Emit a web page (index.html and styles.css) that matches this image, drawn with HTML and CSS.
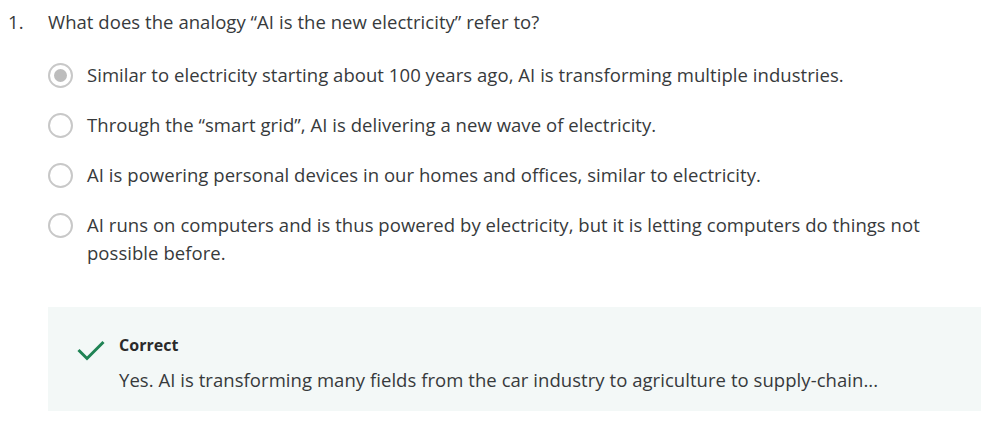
FILE: index.html
```html
<!DOCTYPE html>
<html lang="en">
<head>
<meta charset="utf-8">
<link rel="stylesheet" href="styles.css">
</head>
<body>
<div class="question">
  <div class="q-row">
    <span class="q-num">1.</span>
    <span class="q-text">What does the analogy “AI is the new electricity” refer to?</span>
  </div>
  <div class="options">
    <div class="option">
      <span class="radio checked"></span>
      <span class="opt-text">Similar to electricity starting about 100 years ago, AI is transforming multiple industries.</span>
    </div>
    <div class="option">
      <span class="radio"></span>
      <span class="opt-text">Through the “smart grid”, AI is delivering a new wave of electricity.</span>
    </div>
    <div class="option">
      <span class="radio"></span>
      <span class="opt-text">AI is powering personal devices in our homes and offices, similar to electricity.</span>
    </div>
    <div class="option">
      <span class="radio"></span>
      <span class="opt-text">AI runs on computers and is thus powered by electricity, but it is letting computers do things not possible before.</span>
    </div>
  </div>
  <div class="feedback">
    <svg class="check" width="28" height="22" viewBox="0 0 28 22" aria-hidden="true">
      <polyline points="1.5,10 10,18.5 26.5,2" fill="none" stroke="#1f8354" stroke-width="3"/>
    </svg>
    <div class="fb-body">
      <div class="fb-title">Correct</div>
      <div class="fb-text">Yes. AI is transforming many fields from the car industry to agriculture to supply-chain...</div>
    </div>
  </div>
</div>
</body>
</html>
```

FILE: styles.css
```css
html, body {
  margin: 0;
  background: #ffffff;
}
body {
  padding: 8px;
  font-family: "Open Sans", "Liberation Sans", sans-serif;
  font-size: 18.5px;
  letter-spacing: 0.05px;
  line-height: 28px;
  color: #373a3c;
}
.q-row {
  display: flex;
}
.q-num {
  width: 40px;
  flex: none;
}
.options {
  margin: 25px 0 0 40px;
  display: flex;
  flex-direction: column;
  gap: 22px;
}
.option {
  display: flex;
  align-items: flex-start;
  gap: 14px;
  padding-right: 20px;
}
.radio {
  flex: none;
  box-sizing: border-box;
  width: 25px;
  height: 25px;
  margin-top: 1.5px;
  border: 2.5px solid #c8c8c8;
  border-radius: 50%;
  display: flex;
  align-items: center;
  justify-content: center;
}
.radio.checked::after {
  content: "";
  width: 13px;
  height: 13px;
  border-radius: 50%;
  background: #bdbdbd;
}
.feedback {
  margin: 40px 0 0 40px;
  width: 933px;
  box-sizing: border-box;
  background: #f3f8f7;
  padding: 26px 0 17px 29px;
  display: flex;
  gap: 14px;
}
.check {
  flex: none;
  margin-top: 7px;
}
.fb-title {
  font-size: 16px;
  font-weight: 700;
  line-height: 20px;
  color: #2a2a2a;
  margin-top: 2px;
}
.fb-text {
  margin-top: 11px;
}
```
